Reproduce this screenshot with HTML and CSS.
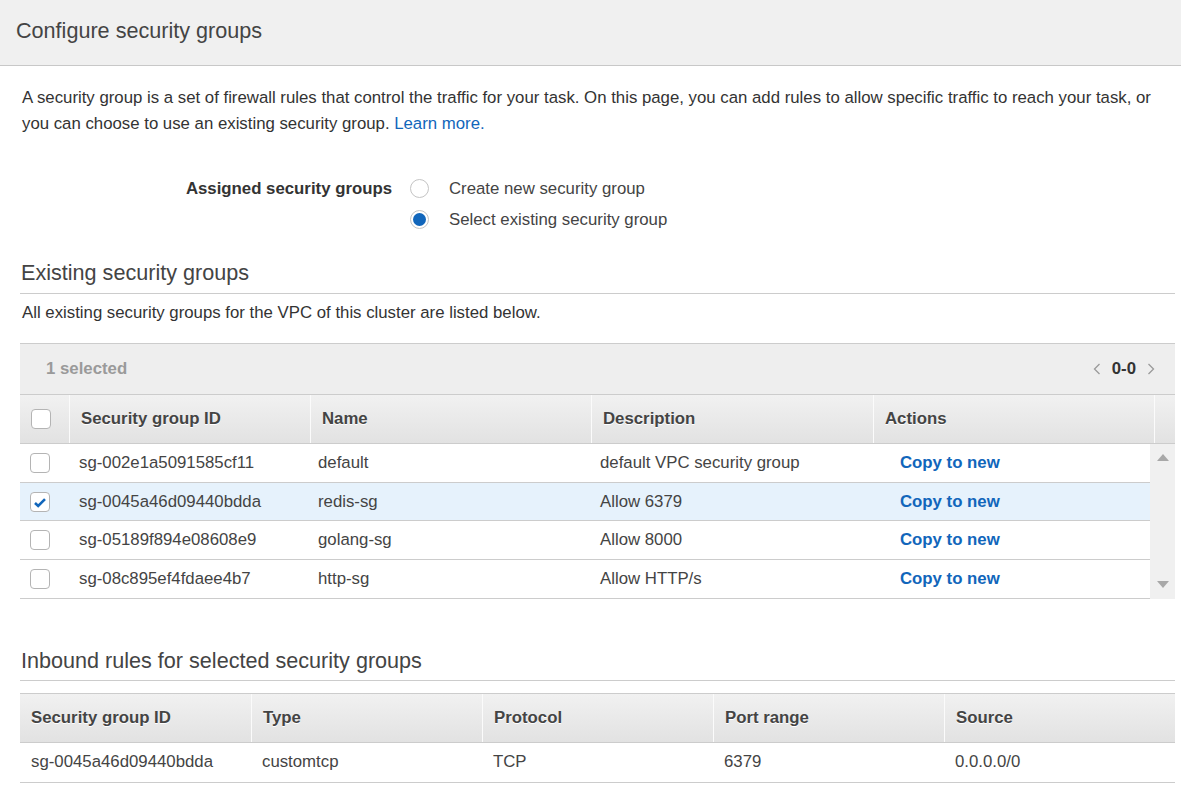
FILE: index.html
```html
<!DOCTYPE html>
<html lang="en">
<head>
<meta charset="utf-8">
<title>Configure security groups</title>
<link rel="stylesheet" href="styles.css">
</head>
<body>
<div class="page-header">
  <h1 class="page-title">Configure security groups</h1>
</div>
<div class="content">
  <p class="intro">A security group is a set of firewall rules that control the traffic for your task. On this page, you can add rules to allow specific traffic to reach your task, or<br>you can choose to use an existing security group. <a class="link" href="#">Learn more.</a></p>

  <div class="assign">
    <div class="assign-label">Assigned security groups</div>
    <div class="radios">
      <div class="radio"><span class="radio-circle"></span><span>Create new security group</span></div>
      <div class="radio"><span class="radio-circle checked"><span class="radio-dot"></span></span><span>Select existing security group</span></div>
    </div>
  </div>

  <h2 class="section-title">Existing security groups</h2>
  <p class="section-desc">All existing security groups for the VPC of this cluster are listed below.</p>

  <div class="sg-table">
    <div class="toolbar">
      <span class="selected-count">1 selected</span>
      <div class="pager">
        <svg class="chev" width="8" height="12" viewBox="0 0 8 12"><polyline points="6.5,1 1.5,6 6.5,11" fill="none" stroke="#9a9a9a" stroke-width="1.3"/></svg>
        <span class="pager-range">0-0</span>
        <svg class="chev" width="8" height="12" viewBox="0 0 8 12"><polyline points="1.5,1 6.5,6 1.5,11" fill="none" stroke="#9a9a9a" stroke-width="1.3"/></svg>
      </div>
    </div>
    <div class="sg-head">
      <div class="th th-check"><span class="checkbox"></span></div>
      <div class="th">Security group ID</div>
      <div class="th">Name</div>
      <div class="th">Description</div>
      <div class="th">Actions</div>
      <div class="th"></div>
    </div>
    <div class="sg-body">
      <div class="sg-rows">
        <div class="sg-row">
          <div class="td td-check"><span class="checkbox"></span></div>
          <div class="td">sg-002e1a5091585cf11</div>
          <div class="td">default</div>
          <div class="td">default VPC security group</div>
          <div class="td td-action"><a class="action" href="#">Copy to new</a></div>
        </div>
        <div class="sg-row selected">
          <div class="td td-check"><span class="checkbox"><svg width="14" height="11" viewBox="0 0 14 11"><path d="M2 6 L5.2 9 L12 2.2" fill="none" stroke="#1166bb" stroke-width="2.6"/></svg></span></div>
          <div class="td">sg-0045a46d09440bdda</div>
          <div class="td">redis-sg</div>
          <div class="td">Allow 6379</div>
          <div class="td td-action"><a class="action" href="#">Copy to new</a></div>
        </div>
        <div class="sg-row">
          <div class="td td-check"><span class="checkbox"></span></div>
          <div class="td">sg-05189f894e08608e9</div>
          <div class="td">golang-sg</div>
          <div class="td">Allow 8000</div>
          <div class="td td-action"><a class="action" href="#">Copy to new</a></div>
        </div>
        <div class="sg-row">
          <div class="td td-check"><span class="checkbox"></span></div>
          <div class="td">sg-08c895ef4fdaee4b7</div>
          <div class="td">http-sg</div>
          <div class="td">Allow HTTP/s</div>
          <div class="td td-action"><a class="action" href="#">Copy to new</a></div>
        </div>
      </div>
      <div class="scrollbar">
        <svg width="12" height="7" viewBox="0 0 12 7"><polygon points="0,7 6,0 12,7" fill="#a8a8a8"/></svg>
        <svg width="12" height="7" viewBox="0 0 12 7"><polygon points="0,0 12,0 6,7" fill="#a8a8a8"/></svg>
      </div>
    </div>
  </div>

  <h2 class="section-title inbound-title">Inbound rules for selected security groups</h2>

  <div class="rules-table">
    <div class="rules-head">
      <div class="th">Security group ID</div>
      <div class="th">Type</div>
      <div class="th">Protocol</div>
      <div class="th">Port range</div>
      <div class="th">Source</div>
    </div>
    <div class="rules-row">
      <div class="td">sg-0045a46d09440bdda</div>
      <div class="td">customtcp</div>
      <div class="td">TCP</div>
      <div class="td">6379</div>
      <div class="td">0.0.0.0/0</div>
    </div>
  </div>
</div>
</body>
</html>
```

FILE: styles.css
```css
html, body {
  margin: 0;
  padding: 0;
  background: #ffffff;
}

body {
  font-family: "Liberation Sans", Arial, sans-serif;
  font-size: 16.8px;
  color: #333333;
}

.page-header {
  height: 65px;
  background: #f0f0f0;
  border-bottom: 1px solid #c8c8c8;
  padding: 0 16px;
}

.page-title {
  margin: 0;
  padding-top: 18px;
  font-size: 21.6px;
  line-height: 25px;
  font-weight: normal;
  color: #444444;
}

.content {
  padding: 0 6px 0 20px;
}

.intro {
  margin: 19px 0 0;
  padding-left: 2px;
  line-height: 26px;
}

.link {
  color: #1166bb;
  text-decoration: none;
}

.assign {
  display: grid;
  grid-template-columns: 372px auto;
  column-gap: 18px;
  margin-top: 36px;
}

.assign-label {
  text-align: right;
  font-weight: bold;
  line-height: 31px;
  color: #333333;
}

.radios {
  display: flex;
  flex-direction: column;
}

.radio {
  display: flex;
  align-items: center;
  gap: 20px;
  height: 31px;
  color: #444444;
}

.radio-circle {
  width: 19px;
  height: 19px;
  box-sizing: border-box;
  border: 1px solid #c4c4c4;
  border-radius: 50%;
  background: #ffffff;
  display: flex;
  align-items: center;
  justify-content: center;
}

.radio-dot {
  width: 13px;
  height: 13px;
  border-radius: 50%;
  background: #1166bb;
}

.section-title {
  margin: 25px 0 0;
  padding: 0 0 7px 1px;
  font-size: 21.6px;
  line-height: 26px;
  font-weight: normal;
  color: #444444;
  border-bottom: 1px solid #cccccc;
}

.section-desc {
  margin: 6px 0 0;
  padding-left: 2px;
  line-height: 26px;
}

.sg-table {
  margin-top: 17px;
}

.toolbar {
  height: 50px;
  border-top: 1px solid #cccccc;
  background: #eeeeee;
  display: flex;
  align-items: center;
  justify-content: space-between;
  padding: 0 20px 0 26px;
}

.selected-count {
  color: #9a9a9a;
  font-weight: bold;
}

.pager {
  display: flex;
  align-items: center;
  gap: 11px;
}

.pager-range {
  font-weight: bold;
  color: #333333;
}

.sg-head {
  display: grid;
  grid-template-columns: 49px 241px 281px 282px 281px 1fr;
  height: 48px;
  border-top: 1px solid #cccccc;
  border-bottom: 1px solid #cccccc;
  background: linear-gradient(#f1f1f1, #e2e2e2);
}

.th {
  display: flex;
  align-items: center;
  padding-left: 11px;
  font-weight: bold;
  color: #444444;
  text-shadow: 0 1px 0 #ffffff;
  border-left: 1px solid #fbfbfb;
}

.th:first-child {
  border-left: none;
}

.th-check,
.td-check {
  padding-left: 11px;
}

.checkbox {
  width: 20px;
  height: 20px;
  box-sizing: border-box;
  border: 1px solid #b4b4b4;
  border-radius: 4px;
  background: #ffffff;
  display: flex;
  align-items: center;
  justify-content: center;
  padding-top: 2px;
}

.sg-body {
  display: flex;
}

.sg-rows {
  flex: 1;
}

.sg-row {
  display: grid;
  grid-template-columns: 49px 239px 282px 283px 1fr;
  height: 37.7px;
  border-bottom: 1px solid #cccccc;
  background: #ffffff;
  color: #444444;
}

.sg-row.selected {
  background: #e6f2fc;
}

.td {
  display: flex;
  align-items: center;
  padding-left: 10px;
}

.td-action {
  padding-left: 27px;
}

.action {
  color: #1166bb;
  font-weight: bold;
  text-decoration: none;
}

.scrollbar {
  width: 25px;
  background: #f0f0f0;
  display: flex;
  flex-direction: column;
  align-items: center;
  justify-content: space-between;
  padding: 10px 0 11px;
}

.inbound-title {
  margin-top: 49px;
  padding-bottom: 6px;
}

.rules-table {
  margin-top: 12px;
}

.rules-head {
  display: grid;
  grid-template-columns: repeat(5, 1fr);
  height: 48px;
  border-top: 1px solid #cccccc;
  border-bottom: 1px solid #cccccc;
  background: linear-gradient(#f1f1f1, #e2e2e2);
}

.rules-row {
  display: grid;
  grid-template-columns: repeat(5, 1fr);
  height: 39px;
  border-bottom: 1px solid #cccccc;
  color: #444444;
}

.rules-row .td {
  padding-left: 11px;
}
```
